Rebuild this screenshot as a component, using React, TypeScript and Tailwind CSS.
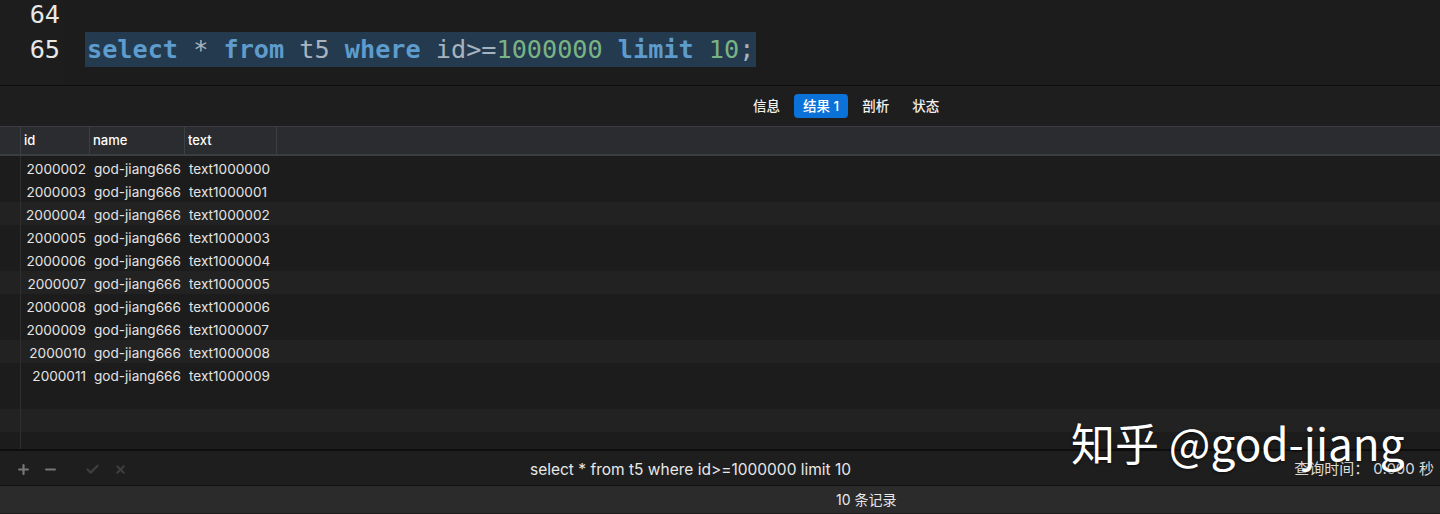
import { Plus, Minus, Check, X } from "lucide-react";

const rows = [
  ["2000002", "god-jiang666", "text1000000"],
  ["2000003", "god-jiang666", "text1000001"],
  ["2000004", "god-jiang666", "text1000002"],
  ["2000005", "god-jiang666", "text1000003"],
  ["2000006", "god-jiang666", "text1000004"],
  ["2000007", "god-jiang666", "text1000005"],
  ["2000008", "god-jiang666", "text1000006"],
  ["2000009", "god-jiang666", "text1000007"],
  ["2000010", "god-jiang666", "text1000008"],
  ["2000011", "god-jiang666", "text1000009"],
  ["", "", ""],
  ["", "", ""],
  ["", "", ""],
];

const tabs = ["信息", "结果 1", "剖析", "状态"];

function App() {
  return (
    <div className="relative h-[514px] w-[1440px] overflow-hidden bg-[#1c1c1c] font-['Inter','Noto_Sans_CJK_SC',sans-serif] text-[#e6e6e6]">
      {/* editor */}
      <div className="flex h-[85px] overflow-hidden font-['DejaVu_Sans_Mono',monospace] text-[25.2px] leading-[35px]">
        <div className="-mt-[3px] w-[64px] shrink-0 bg-[#1d1d1d] pr-[4px] text-right text-[#e8e8e8]">
          <div>64</div>
          <div>65</div>
        </div>
        <div className="-mt-[3px] pl-[21px]">
          <div>&nbsp;</div>
          <div className="inline-block bg-[#243a4f] pl-[2px] pr-[2px] whitespace-pre">
            <span className="font-bold text-[#5d9ccc]">select</span>
            <span className="text-[#a7b3bf]"> * </span>
            <span className="font-bold text-[#5d9ccc]">from</span>
            <span className="text-[#a7b3bf]"> t5 </span>
            <span className="font-bold text-[#5d9ccc]">where</span>
            <span className="text-[#a7b3bf]"> id&gt;=</span>
            <span className="text-[#79b384]">1000000</span>
            <span className="text-[#a7b3bf]"> </span>
            <span className="font-bold text-[#5d9ccc]">limit</span>
            <span className="text-[#a7b3bf]"> </span>
            <span className="text-[#79b384]">10</span>
            <span className="text-[#a7b3bf]">;</span>
          </div>
        </div>
      </div>

      {/* tab bar */}
      <div className="flex h-[41px] items-center gap-[5px] border-t border-[#0d0d0d] bg-[#1e1e1e] pl-[744px]">
        {tabs.map((t) => (
          <div
            key={t}
            className={
              t === "结果 1"
                ? "flex h-[24px] items-center rounded-[4px] bg-[#0a72d9] px-[9px] text-[13.5px] font-medium text-white"
                : "flex h-[24px] items-center px-[9px] text-[13.5px] font-medium text-[#f0f0f0]"
            }
          >
            {t}
          </div>
        ))}
      </div>

      {/* table header */}
      <div className="flex h-[30px] border-t border-[#3a3c3f] border-b-2 border-b-[#3b3e41] bg-[#2a2c2f] text-[13px] font-medium text-white">
        <div className="w-[21px] border-r border-[#3d4043]" />
        <div className="flex w-[69px] items-center border-r border-[#3d4043] pl-[3px]">id</div>
        <div className="flex w-[95px] items-center border-r border-[#3d4043] pl-[3px]">name</div>
        <div className="flex w-[92px] items-center border-r border-[#3d4043] pl-[3px]">text</div>
      </div>

      {/* data */}
      <div className="h-[293px] overflow-hidden text-[13.6px] text-[#e4e4e4]">
        {rows.map((r, i) => (
          <div
            key={i}
            className={`flex h-[23px] items-center pt-[3px] ${i % 3 === 2 ? "bg-[#222222]" : "bg-[#1c1c1c]"}`}
          >
            <div className="-mt-[3px] h-[23px] w-[21px] border-r border-[#2f2f2f]" />
            <div className="w-[65px] text-right">{r[0]}</div>
            <div className="w-[103px] pl-[8px]">{r[1]}</div>
            <div>{r[2]}</div>
          </div>
        ))}
      </div>

      {/* toolbar */}
      <div className="flex h-[36px] items-center border-t-2 border-[#0e0e0e] bg-[#1e1e1e] pt-[3px]">
        <div className="flex items-center pl-[16px]">
          <Plus size={15} strokeWidth={3.5} className="text-[#767676]" />
          <Minus size={15} strokeWidth={3.5} className="ml-[12px] text-[#767676]" />
          <Check size={15} strokeWidth={3.5} className="ml-[27px] text-[#3f3f3f]" />
          <X size={13} strokeWidth={3.5} className="ml-[14px] text-[#3f3f3f]" />
        </div>
        <div className="ml-[403px] text-[15.5px] text-[#e8e8e8]">
          select * from t5 where id&gt;=1000000 limit 10
        </div>
        <div className="ml-auto pr-[6px] text-[15px] text-[#dcdcdc]">查询时间： 0.000 秒</div>
      </div>

      {/* status bar */}
      <div className="flex h-[28px] items-center border-t border-[#111111] bg-[#2b2b2b] pl-[836px] text-[14px] text-[#e8e8e8]">
        10 条记录
      </div>

      {/* watermark */}
      <div className="absolute left-[1071px] top-[420px] font-['Noto_Sans_CJK_SC',sans-serif] text-[44px] leading-none text-white [text-shadow:0_1px_3px_rgba(0,0,0,0.6)]">
        知乎 @god-jiang
      </div>
    </div>
  );
}

export default App;
